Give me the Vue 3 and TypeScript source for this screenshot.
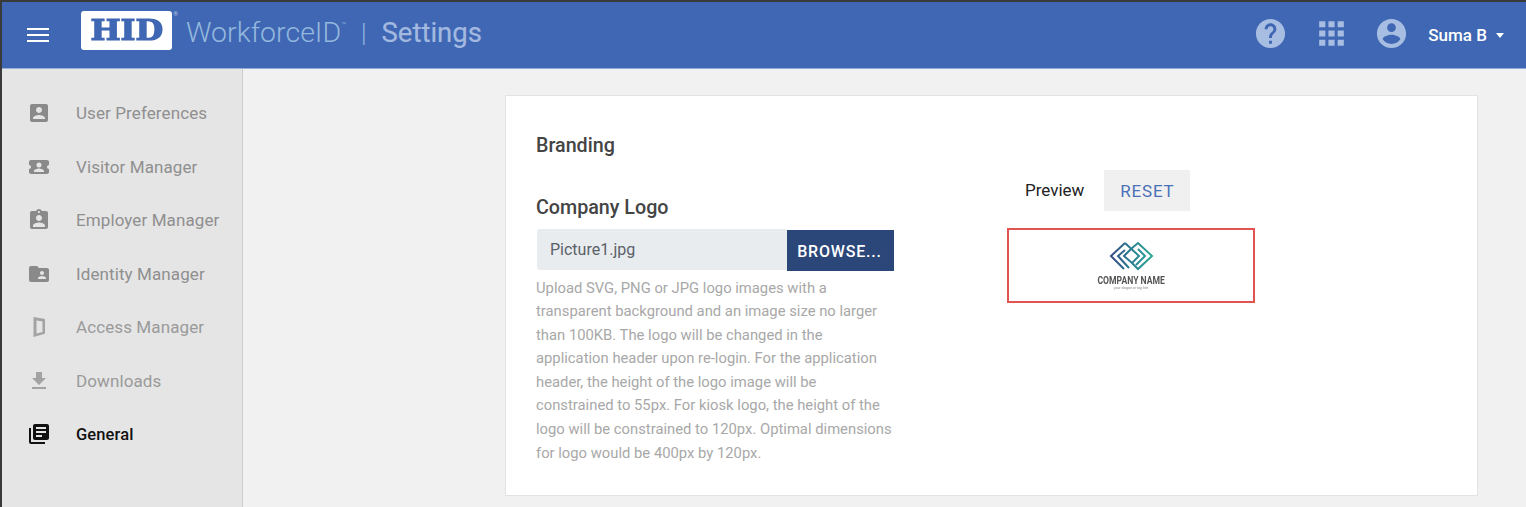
<script setup lang="ts">
interface NavItem {
  label: string;
  path: string;
  active?: boolean;
  faded?: boolean;
}

const navItems: NavItem[] = [
  {
    label: "User Preferences",
    path: "M3 5v14c0 1.1.89 2 2 2h14c1.1 0 2-.9 2-2V5c0-1.1-.9-2-2-2H5c-1.11 0-2 .9-2 2zm12 4c0 1.66-1.34 3-3 3s-3-1.34-3-3 1.34-3 3-3 3 1.34 3 3zm-9 8c0-2 4-3.1 6-3.1s6 1.1 6 3.1v1H6v-1z",
  },
  {
    label: "Visitor Manager",
    path: "M4 5h16c1.1 0 2 .9 2 2v3c-1.1 0-2 .9-2 2s.9 2 2 2v3c0 1.1-.9 2-2 2H4c-1.1 0-2-.9-2-2v-3c1.1 0 2-.9 2-2s-.9-2-2-2V7c0-1.1.9-2 2-2zm8 2.5a2.500 2.500 0 1 0 0 5 2.500 2.500 0 0 0 0-5zM7 17h10v-.8c0-1.7-3.3-2.600-5-2.600s-5 .9-5 2.600v.8z",
  },
  {
    label: "Employer Manager",
    path: "M19 3h-4.18C14.4 1.84 13.3 1 12 1c-1.3 0-2.4.84-2.82 2H5c-1.1 0-2 .9-2 2v14c0 1.1.9 2 2 2h14c1.1 0 2-.9 2-2V5c0-1.1-.9-2-2-2zm-7 0c.55 0 1 .45 1 1s-.45 1-1 1-1-.45-1-1 .45-1 1-1zm0 4c1.66 0 3 1.34 3 3s-1.34 3-3 3-3-1.34-3-3 1.34-3 3-3zm6 12H6v-1.4c0-2 4-3.1 6-3.1s6 1.1 6 3.1V19z",
  },
  {
    label: "Identity Manager",
    path: "M20 6h-8l-2-2H4c-1.1 0-1.99.9-1.99 2L2 18c0 1.1.9 2 2 2h16c1.1 0 2-.9 2-2V8c0-1.1-.9-2-2-2zm-5 3c1.1 0 2 .9 2 2s-.9 2-2 2-2-.9-2-2 .9-2 2-2zm4 8h-8v-1c0-1.33 2.67-2 4-2s4 .67 4 2v1z",
  },
  {
    label: "Access Manager",
    path: "M6.500 2 17 3.800c.6.1 1 .5 1 1V18c0 .6-.4 1-1 1.100L6.500 22V2zM9.500 5.500v13L15.500 17V6.500l-6-1z",
    faded: true,
  },
  {
    label: "Downloads",
    path: "M19 9h-4V3H9v6H5l7 7 7-7zM5 18v2h14v-2H5z",
    faded: true,
  },
  {
    label: "General",
    path: "M4 6H2v14c0 1.1.9 2 2 2h14v-2H4V6zm16-4H8c-1.1 0-2 .9-2 2v12c0 1.1.9 2 2 2h12c1.1 0 2-.9 2-2V4c0-1.1-.9-2-2-2zm-1 9H9V9h10v2zm-4 4H9v-2h6v2zm4-8H9V5h10v2z",
    active: true,
  },
];

const helpLines: string[] = [
  "Upload SVG, PNG or JPG logo images with a",
  "transparent background and an image size no larger",
  "than 100KB. The logo will be changed in the",
  "application header upon re-login. For the application",
  "header, the height of the logo image will be",
  "constrained to 55px. For kiosk logo, the height of the",
  "logo will be constrained to 120px. Optimal dimensions",
  "for logo would be 400px by 120px.",
];
</script>

<template>
  <div class="page">
    <header class="topbar">
      <svg class="menu" viewBox="0 0 22 16" width="22" height="16">
        <path d="M0 1h22v2H0zM0 7h22v2H0zM0 13h22v2H0z" fill="#fff" />
      </svg>
      <div class="brand">
        <span class="hid">HID</span>
        <span class="reg">®</span>
      </div>
      <span class="product">WorkforceID<sup>™</sup></span>
      <span class="divider">|</span>
      <span class="section">Settings</span>
      <div class="actions">
        <svg class="icon-help" viewBox="0 0 24 24" width="35" height="35">
          <path fill="#a7bde2" d="M12 2C6.48 2 2 6.48 2 12s4.48 10 10 10 10-4.48 10-10S17.52 2 12 2zm1 17h-2v-2h2v2zm2.07-7.75l-.9.92C13.45 12.9 13 13.5 13 15h-2v-.5c0-1.1.45-2.1 1.17-2.83l1.24-1.26c.37-.36.59-.86.59-1.41 0-1.1-.9-2-2-2s-2 .9-2 2H8c0-2.21 1.79-4 4-4s4 1.79 4 4c0 .88-.36 1.68-.93 2.25z" />
        </svg>
        <svg class="icon-apps" viewBox="0 0 24 24" width="37" height="37">
          <path fill="#a7bde2" d="M4 8h4V4H4v4zm6 12h4v-4h-4v4zm-6 0h4v-4H4v4zm0-6h4v-4H4v4zm6 0h4v-4h-4v4zm6-10v4h4V4h-4zm-6 4h4V4h-4v4zm6 6h4v-4h-4v4zm0 6h4v-4h-4v4z" />
        </svg>
        <svg class="icon-user" viewBox="0 0 24 24" width="35" height="35">
          <path fill="#a7bde2" d="M12 2C6.48 2 2 6.48 2 12s4.48 10 10 10 10-4.48 10-10S17.52 2 12 2zm0 3c1.66 0 3 1.34 3 3s-1.34 3-3 3-3-1.34-3-3 1.34-3 3-3zm0 14.2c-2.500 0-4.71-1.28-6-3.22.03-1.99 4-3.08 6-3.08 1.99 0 5.97 1.09 6 3.08-1.29 1.94-3.500 3.22-6 3.22z" />
        </svg>
        <span class="user-name">Suma B</span>
        <span class="caret"></span>
      </div>
    </header>

    <div class="body">
      <nav class="sidebar">
        <a
          v-for="item in navItems"
          :key="item.label"
          class="nav-item"
          :class="{ active: item.active, faded: item.faded }"
        >
          <svg viewBox="0 0 24 24" width="24" height="24">
            <path :d="item.path" fill="currentColor" fill-rule="evenodd" />
          </svg>
          <span>{{ item.label }}</span>
        </a>
      </nav>

      <main class="content">
        <section class="card">
          <div class="left">
            <h2 class="title">Branding</h2>
            <h3 class="subtitle">Company Logo</h3>
            <div class="file-row">
              <div class="file-name">Picture1.jpg</div>
              <button class="browse">BROWSE...</button>
            </div>
            <p class="help">
              <span v-for="line in helpLines" :key="line">{{ line }}</span>
            </p>
          </div>
          <div class="right">
            <div class="preview-row">
              <span class="preview-label">Preview</span>
              <button class="reset">RESET</button>
            </div>
            <div class="logo-box">
              <svg class="mark" viewBox="0 0 46 30" width="46" height="30">
                <defs>
                  <linearGradient id="markGrad" gradientUnits="userSpaceOnUse" x1="2" y1="0" x2="44" y2="0">
                    <stop offset="0" stop-color="#3a4884" />
                    <stop offset="0.5" stop-color="#2a7d92" />
                    <stop offset="1" stop-color="#2fa898" />
                  </linearGradient>
                </defs>
                <g fill="none" stroke="url(#markGrad)" stroke-width="2">
                  <path d="M17 2 L3 15 L16 28" />
                  <path d="M17 2 L31 15 L24 22 L16 15 L23 8" />
                  <path d="M17 9 L10 15 L21 27" />
                  <path d="M23 8 L30 2 L44 15 L30 28 L24 22" />
                  <path d="M30 8 L37 15 L28 24" />
                </g>
              </svg>
              <span class="company">COMPANY NAME</span>
              <span class="tagline">your slogan or tag line</span>
            </div>
          </div>
        </section>
      </main>
    </div>
  </div>
</template>

<style>
html,
body {
  margin: 0;
  height: 100%;
  overflow: hidden;
  background: #333;
}
</style>

<style scoped>
.page {
  width: 1526px;
  height: 507px;
  box-sizing: border-box;
  border-top: 2px solid #3a3a3a;
  border-left: 2px solid #3a3a3a;
  display: flex;
  flex-direction: column;
  font-family: Roboto, "Liberation Sans", sans-serif;
  overflow: hidden;
}
.topbar {
  height: 67px;
  flex: none;
  box-sizing: border-box;
  background: #3f67b3;
  border-bottom: 1px solid #8ea9da;
  display: flex;
  align-items: center;
  padding-left: 25px;
}
.menu {
  flex: none;
}
.brand {
  margin-left: 32px;
  width: 91px;
  height: 39px;
  margin-top: -9px;
  background: #fff;
  border-radius: 3px;
  display: flex;
  align-items: center;
  justify-content: center;
  position: relative;
}
.hid {
  font-family: "DejaVu Serif", "Liberation Serif", serif;
  font-weight: 700;
  font-size: 27px;
  line-height: 1;
  color: #3f67b3;
  letter-spacing: 0;
  -webkit-text-stroke: 1.200px #3f67b3;
  transform: scaleX(1.18);
}
.reg {
  position: absolute;
  right: -6px;
  top: -1px;
  font-size: 6px;
  color: #b8cbe8;
}
.product {
  margin-left: 14px;
  font-size: 28.500px;
  font-weight: 300;
  color: #94b8de;
  width: 161px;
  white-space: nowrap;
  margin-top: -5px;
}
.product sup {
  font-size: 8px;
  vertical-align: 14px;
  line-height: 0;
}
.divider {
  margin-left: 14px;
  font-size: 25px;
  font-weight: 300;
  color: #94b8de;
  margin-top: -4px;
}
.section {
  margin-left: 15px;
  font-size: 27.500px;
  color: #a3b9e0;
  margin-top: -6px;
  -webkit-text-stroke: 0.200px #a3b9e0;
}
.actions {
  margin-left: auto;
  display: flex;
  align-items: center;
  padding-right: 22px;
  margin-top: -3px;
}
.icon-apps {
  margin-left: 25px;
}
.icon-user {
  margin-left: 24px;
}
.user-name {
  margin-left: 19px;
  font-size: 17px;
  font-weight: 500;
  color: #fff;
  margin-top: 3px;
}
.caret {
  margin-left: 9px;
  margin-top: 4px;
  width: 0;
  height: 0;
  border-left: 4.500px solid transparent;
  border-right: 4.500px solid transparent;
  border-top: 5px solid #fff;
}
.body {
  flex: 1;
  display: flex;
  min-height: 0;
}
.sidebar {
  width: 240px;
  flex: none;
  background: #e5e5e5;
  border-right: 1px solid #cdcdcd;
  box-shadow: 1px 0 1px #dcdcdc;
  padding-top: 17.500px;
  box-sizing: content-box;
}
.nav-item {
  height: 53.500px;
  padding-left: 25px;
  display: flex;
  align-items: center;
  gap: 25px;
  font-size: 17px;
  letter-spacing: 0.1px;
  color: #8f8f8f;
}
.nav-item svg {
  color: #8a8a8a;
  flex: none;
}
.nav-item.faded {
  color: #9a9a9a;
}
.nav-item.faded svg {
  color: #a3a3a3;
}
.nav-item.active,
.nav-item.active svg {
  color: #111;
}
.nav-item.active span {
  font-weight: 500;
  font-size: 16.500px;
}
.content {
  flex: 1;
  background: #f1f1f1;
  padding: 26px 48px 0 262px;
  min-width: 0;
}
.card {
  height: 401px;
  box-sizing: border-box;
  background: #fff;
  border: 1px solid #e3e3e3;
  padding-left: 30px;
  display: flex;
}
.left {
  width: 358px;
  flex: none;
}
.title {
  margin: 38px 0 0;
  font-size: 19.700px;
  line-height: 24px;
  font-weight: 500;
  color: #444;
}
.subtitle {
  margin: 38px 0 0;
  font-size: 19.700px;
  line-height: 24px;
  font-weight: 500;
  color: #444;
}
.file-row {
  margin-top: 9px;
  height: 42px;
  display: flex;
  align-items: flex-start;
}
.file-name {
  width: 250px;
  height: 41px;
  margin-left: 1px;
  box-sizing: border-box;
  padding: 0 13px;
  background: #e9ecef;
  border-radius: 3px 0 0 3px;
  font-size: 16px;
  line-height: 41px;
  color: #5a6168;
}
.browse {
  width: 107px;
  height: 41px;
  margin-top: 1px;
  border: 0;
  padding: 1px 2px 0 0;
  background: #2b4679;
  color: #fff;
  font-family: inherit;
  font-size: 16px;
  font-weight: 500;
  letter-spacing: 0.8px;
}
.help {
  margin: 5.500px 0 0;
  font-size: 14.800px;
  line-height: 23.600px;
  color: #a8a8a8;
}
.help span {
  display: block;
  white-space: nowrap;
}
.right {
  margin-left: 113px;
  width: 248px;
  flex: none;
  padding-top: 74px;
}
.preview-row {
  height: 41px;
  display: flex;
  align-items: center;
}
.preview-label {
  margin-left: 18px;
  margin-top: -2px;
  font-size: 17px;
  color: #222;
}
.reset {
  margin-left: 20px;
  width: 86px;
  height: 41px;
  border: 0;
  background: #f0f0f0;
  color: #4a70b8;
  font-family: inherit;
  font-size: 17px;
  letter-spacing: 0.8px;
}
.logo-box {
  margin-top: 17px;
  height: 75px;
  box-sizing: border-box;
  border: 2.500px solid #e2544f;
  display: flex;
  flex-direction: column;
  align-items: center;
  padding-top: 11px;
}
.mark {
  flex: none;
  filter: blur(0.4px);
}
.company {
  margin-top: 4px;
  font-size: 10px;
  line-height: 11px;
  font-weight: 700;
  color: #555;
  transform: scaleX(0.86);
  white-space: nowrap;
  filter: blur(0.35px);
}
.tagline {
  font-size: 3.500px;
  line-height: 5px;
  color: #888;
  white-space: nowrap;
}
</style>
